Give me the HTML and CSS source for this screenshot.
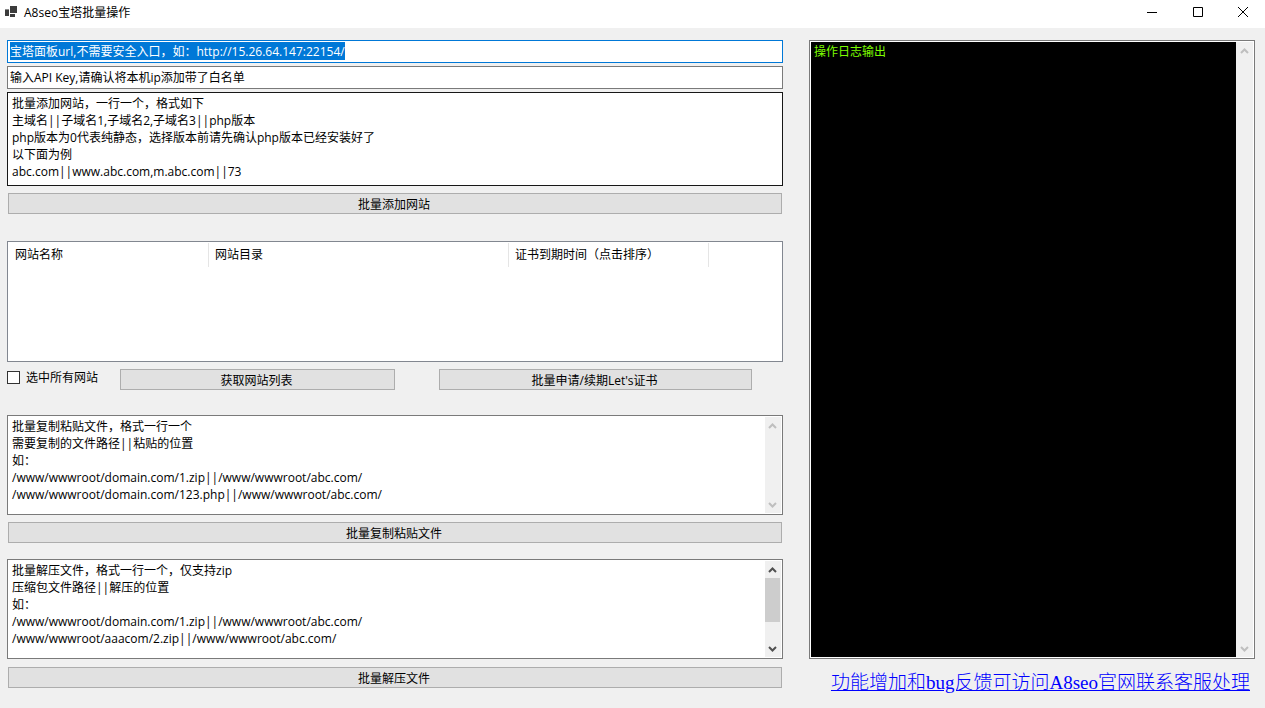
FILE: index.html
```html
<!DOCTYPE html>
<html lang="zh-CN">
<head>
<meta charset="utf-8">
<title>A8seo宝塔批量操作</title>
<link rel="stylesheet" href="styles.css">
</head>
<body>
<header class="titlebar">
  <svg class="app-icon" width="12" height="12" viewBox="0 0 12 12" aria-hidden="true">
    <path fill="#3c3c3c" d="M5 0h7v7H5zM0 4h4v6H0zM5 8h5v3H5z"/>
    <path fill="#8a8a8a" d="M0 3h4v1H0z"/>
  </svg>
  <h1 class="title">A8seo宝塔批量操作</h1>
  <button class="win-btn" type="button" aria-label="最小化"><svg width="12" height="12" viewBox="0 0 12 12"><path d="M1 6.500h10"/></svg></button>
  <button class="win-btn" type="button" aria-label="最大化"><svg width="12" height="12" viewBox="0 0 12 12"><path d="M1.500 1.500h9v9h-9z"/></svg></button>
  <button class="win-btn" type="button" aria-label="关闭"><svg width="12" height="12" viewBox="0 0 12 12"><path d="M1 1l10 10M11 1L1 11"/></svg></button>
</header>
<main class="main">
  <form class="tools">
    <input class="field field-active" id="panel-url" type="text" aria-label="宝塔面板url" value="宝塔面板url,不需要安全入口，如：http://15.26.64.147:22154/">
    <input class="field" type="text" aria-label="API Key" value="输入API Key,请确认将本机ip添加带了白名单">
    <div class="box box-dark">
      <textarea class="area" rows="5" aria-label="批量添加网站列表">批量添加网站，一行一个，格式如下
主域名||子域名1,子域名2,子域名3||php版本
php版本为0代表纯静态，选择版本前请先确认php版本已经安装好了
以下面为例
abc.com||www.abc.com,m.abc.com||73</textarea>
    </div>
    <button class="btn btn-wide" type="button">批量添加网站</button>

    <div class="list">
      <table class="sites">
        <thead><tr><th class="col-name">网站名称</th><th class="col-dir">网站目录</th><th class="col-date">证书到期时间（点击排序）</th><td></td></tr></thead>
      </table>
    </div>
    <div class="actions">
      <label class="check"><input class="tick" type="checkbox">选中所有网站</label>
      <button class="btn btn-fetch" type="button">获取网站列表</button>
      <button class="btn btn-renew" type="button">批量申请/续期Let's证书</button>
    </div>

    <div class="box">
      <textarea class="area" rows="5" aria-label="批量复制粘贴文件列表">批量复制粘贴文件，格式一行一个
需要复制的文件路径||粘贴的位置
如：
/www/wwwroot/domain.com/1.zip||/www/wwwroot/abc.com/
/www/wwwroot/domain.com/123.php||/www/wwwroot/abc.com/</textarea>
      <div class="scroll scroll-off" aria-hidden="true">
        <svg class="arrow" width="15" height="17" viewBox="0 0 15 17"><path d="M4 11l3.500-3.500L11 11"/></svg>
        <svg class="arrow" width="15" height="17" viewBox="0 0 15 17"><path d="M4 7l3.500 3.500L11 7"/></svg>
      </div>
    </div>
    <button class="btn btn-wide" type="button">批量复制粘贴文件</button>

    <div class="box box-last">
      <textarea class="area" rows="5" aria-label="批量解压文件列表">批量解压文件，格式一行一个，仅支持zip
压缩包文件路径||解压的位置
如：
/www/wwwroot/domain.com/1.zip||/www/wwwroot/abc.com/
/www/wwwroot/aaacom/2.zip||/www/wwwroot/abc.com/</textarea>
      <div class="scroll" aria-hidden="true">
        <svg class="arrow" width="15" height="17" viewBox="0 0 15 17"><path d="M4 11l3.500-3.500L11 11"/></svg>
        <div class="thumb"></div>
        <svg class="arrow" width="15" height="17" viewBox="0 0 15 17"><path d="M4 7l3.500 3.500L11 7"/></svg>
      </div>
    </div>
    <button class="btn btn-wide" type="button">批量解压文件</button>
  </form>

  <aside class="side">
    <div class="box log">
      <textarea class="area log-text" aria-label="操作日志" readonly>操作日志输出</textarea>
      <div class="scroll scroll-off" aria-hidden="true">
        <svg class="arrow" width="15" height="17" viewBox="0 0 15 17"><path d="M4 11l3.500-3.500L11 11"/></svg>
        <svg class="arrow" width="15" height="17" viewBox="0 0 15 17"><path d="M4 7l3.500 3.500L11 7"/></svg>
      </div>
    </div>
    <a class="link" href="#">功能增加和bug反馈可访问A8seo官网联系客服处理</a>
  </aside>
</main>
<script src="app.js"></script>
</body>
</html>
```
FILE: styles.css
```css
* { box-sizing: border-box; }

body {
  margin: 0;
  min-height: 100vh;
  display: flex;
  flex-direction: column;
  background: #f0f0f0;
  color: #000;
}

body, input, textarea, button {
  font: 12px/17px "Open Sans", "Noto Sans CJK SC", sans-serif;
}

.titlebar {
  display: flex;
  align-items: center;
  height: 28px;
  padding-left: 5px;
  background: #fff;
}
.app-icon { margin: 0 7px 4px 0; }
.title { flex: 1; margin: 0; padding-bottom: 3px; font-size: 12px; font-weight: 400; }
.win-btn {
  width: 46px;
  height: 28px;
  padding: 0 0 4px;
  border: 0;
  background: none;
  display: grid;
  place-items: center;
}
.win-btn:last-child { width: 44px; }
.win-btn path { fill: none; stroke: #000; stroke-width: 1; }

.main {
  flex: 1;
  display: grid;
  grid-template-columns: 776fr 446fr;
  gap: 26px;
  padding: 12px 10px 12px 7px;
}

.tools { display: flex; flex-direction: column; min-width: 0; }

.field {
  width: 100%;
  height: 23px;
  margin: 0 0 3px;
  padding: 0 2px 1px;
  border: 1px solid #7a7a7a;
  background: #fff;
  color: #000;
  outline: 0;
}
.field-active { border-color: #0078d7; }
.field::selection { background: #0078d7; color: #fff; }

.box {
  display: flex;
  height: 100px;
  padding: 1px;
  border: 1px solid #7a7a7a;
  background: #fff;
}
.box-dark { height: 94px; border-color: #171717; }
.area {
  flex: 1;
  min-width: 0;
  margin: 0;
  padding: 1px 3px;
  border: 0;
  outline: 0;
  resize: none;
  overflow: hidden;
  background: #fff;
  color: #000;
}

.scroll {
  display: flex;
  flex-direction: column;
  width: 16px;
  background: #f0f0f0;
}
.arrow { flex: none; }
.arrow:last-child { margin-top: auto; }
.arrow path { fill: none; stroke: #505050; stroke-width: 2; }
.scroll-off .arrow path { stroke: #bfbfbf; }
.thumb { width: 15px; height: 44px; background: #cdcdcd; }

.btn {
  height: 21px;
  padding: 2px 2px 0 0;
  border: 1px solid #adadad;
  background: #e1e1e1;
  color: #000;
  line-height: 17px;
}
.btn-wide { margin: 7px 1px 0; }

.list {
  height: 121px;
  margin-top: 27px;
  padding: 1px 0;
  border: 1px solid #828790;
  background: #fff;
}
.sites { width: 100%; border-spacing: 0; table-layout: fixed; }
.sites th {
  height: 24px;
  padding: 0 6px 1px;
  border-right: 1px solid #e5e5e5;
  font-weight: 400;
  text-align: left;
}
.sites .col-name { width: 201px; padding-left: 7px; }
.col-dir { width: 300px; }
.col-date { width: 200px; }

.actions { display: flex; align-items: flex-start; margin: 7px 0 25px; }
.check { display: flex; align-items: center; width: 113px; }
.tick {
  appearance: none;
  width: 13px;
  height: 13px;
  margin: 0 6px 0 0;
  border: 1px solid #333;
  background: #fff;
}
.btn-fetch { flex: 0 1 275px; margin-right: 44px; }
.btn-renew { flex: 0 1 313px; }
.box-last { margin-top: 16px; }
.box-last + .btn-wide { margin-top: 8px; }

.side { display: flex; flex-direction: column; min-width: 0; }
.log { height: auto; flex: 0 0 619px; }
.log-text { background: #000; color: #7cfc00; }
.log .scroll { width: 17px; padding-left: 1px; }

.link {
  margin: 11px 5px 0 0;
  align-self: flex-end;
  color: #00f;
  font: 300 19px/26px "Liberation Serif", "Noto Sans CJK SC", serif;
  white-space: nowrap;
}
```
FILE: app.js
```js
const panelUrl = document.getElementById("panel-url");
panelUrl.focus();
panelUrl.select();
```
